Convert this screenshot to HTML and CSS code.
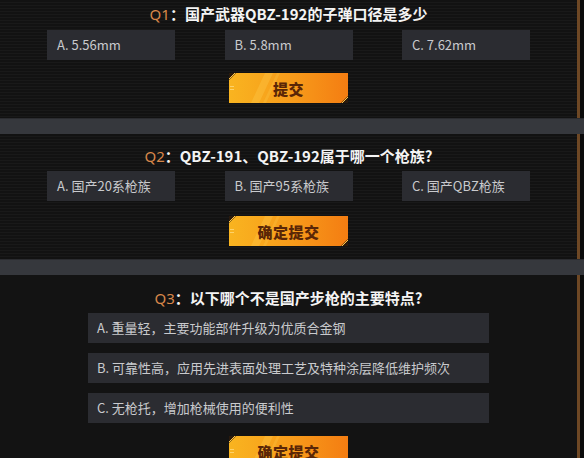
FILE: index.html
```html
<!DOCTYPE html>
<html lang="zh-CN">
<head>
<meta charset="utf-8">
<title>Quiz</title>
<link rel="stylesheet" href="styles.css">
</head>
<body>
<div class="page">
  <section class="quiz quiz-first">
    <h2 class="q-title"><span class="q-no">Q1</span>：国产武器QBZ-192的子弹口径是多少</h2>
    <div class="opts-row">
      <div class="opt">A. 5.56mm</div>
      <div class="opt">B. 5.8mm</div>
      <div class="opt">C. 7.62mm</div>
    </div>
    <div class="btn">
      <svg class="btn-bg" viewBox="0 0 119 30" preserveAspectRatio="none">
        <defs>
          <linearGradient id="g1" x1="0" y1="0" x2="1" y2="0">
            <stop offset="0" stop-color="#f9b420"/>
            <stop offset="0.55" stop-color="#f79a1a"/>
            <stop offset="1" stop-color="#f47d12"/>
          </linearGradient>
        </defs>
        <rect width="119" height="30" fill="url(#g1)"/>
        <polygon points="22,30 36,0 44,0 30,30" fill="#ffd45a" opacity="0.28"/>
        <polygon points="34,30 48,0 51,0 37,30" fill="#ffd45a" opacity="0.22"/>
        <polygon points="0,0 7,0 0,7" fill="#2a1a0c"/>
        <line x1="0" y1="6" x2="6" y2="0" stroke="#ffc54a" stroke-width="1"/>
        <polygon points="119,30 112,30 119,23" fill="#2a1a0c"/>
        <line x1="113" y1="30" x2="119" y2="24" stroke="#ffc54a" stroke-width="1"/>
        <rect x="1" y="13" width="4" height="1" fill="#ffe08a" opacity="0.7"/>
        <rect x="1" y="16" width="4" height="1" fill="#ffe08a" opacity="0.7"/>
      </svg>
      <span class="btn-label">提交</span>
    </div>
  </section>
  <div class="sep"></div>
  <section class="quiz">
    <h2 class="q-title"><span class="q-no">Q2</span>：QBZ-191、QBZ-192属于哪一个枪族?</h2>
    <div class="opts-row">
      <div class="opt">A. 国产20系枪族</div>
      <div class="opt">B. 国产95系枪族</div>
      <div class="opt">C. 国产QBZ枪族</div>
    </div>
    <div class="btn">
      <svg class="btn-bg" viewBox="0 0 119 30" preserveAspectRatio="none">
        <defs>
          <linearGradient id="g2" x1="0" y1="0" x2="1" y2="0">
            <stop offset="0" stop-color="#f9b420"/>
            <stop offset="0.55" stop-color="#f79a1a"/>
            <stop offset="1" stop-color="#f47d12"/>
          </linearGradient>
        </defs>
        <rect width="119" height="30" fill="url(#g2)"/>
        <polygon points="22,30 36,0 44,0 30,30" fill="#ffd45a" opacity="0.28"/>
        <polygon points="34,30 48,0 51,0 37,30" fill="#ffd45a" opacity="0.22"/>
        <polygon points="0,0 7,0 0,7" fill="#2a1a0c"/>
        <line x1="0" y1="6" x2="6" y2="0" stroke="#ffc54a" stroke-width="1"/>
        <polygon points="119,30 112,30 119,23" fill="#2a1a0c"/>
        <line x1="113" y1="30" x2="119" y2="24" stroke="#ffc54a" stroke-width="1"/>
        <rect x="1" y="13" width="4" height="1" fill="#ffe08a" opacity="0.7"/>
        <rect x="1" y="16" width="4" height="1" fill="#ffe08a" opacity="0.7"/>
      </svg>
      <span class="btn-label">确定提交</span>
    </div>
  </section>
  <div class="sep"></div>
  <section class="quiz quiz-last">
    <h2 class="q-title"><span class="q-no">Q3</span>：以下哪个不是国产步枪的主要特点?</h2>
    <div class="opts-col">
      <div class="opt opt-wide">A. 重量轻，主要功能部件升级为优质合金钢</div>
      <div class="opt opt-wide">B. 可靠性高，应用先进表面处理工艺及特种涂层降低维护频次</div>
      <div class="opt opt-wide">C. 无枪托，增加枪械使用的便利性</div>
    </div>
    <div class="btn">
      <svg class="btn-bg" viewBox="0 0 119 30" preserveAspectRatio="none">
        <defs>
          <linearGradient id="g3" x1="0" y1="0" x2="1" y2="0">
            <stop offset="0" stop-color="#f9b420"/>
            <stop offset="0.55" stop-color="#f79a1a"/>
            <stop offset="1" stop-color="#f47d12"/>
          </linearGradient>
        </defs>
        <rect width="119" height="30" fill="url(#g3)"/>
        <polygon points="22,30 36,0 44,0 30,30" fill="#ffd45a" opacity="0.28"/>
        <polygon points="34,30 48,0 51,0 37,30" fill="#ffd45a" opacity="0.22"/>
        <polygon points="0,0 7,0 0,7" fill="#2a1a0c"/>
        <line x1="0" y1="6" x2="6" y2="0" stroke="#ffc54a" stroke-width="1"/>
        <polygon points="119,30 112,30 119,23" fill="#2a1a0c"/>
        <line x1="113" y1="30" x2="119" y2="24" stroke="#ffc54a" stroke-width="1"/>
        <rect x="1" y="13" width="4" height="1" fill="#ffe08a" opacity="0.7"/>
        <rect x="1" y="16" width="4" height="1" fill="#ffe08a" opacity="0.7"/>
      </svg>
      <span class="btn-label">确定提交</span>
    </div>
  </section>
</div>
</body>
</html>
```

FILE: styles.css
```css
html, body {
  margin: 0;
  padding: 0;
  background: #0b0b0b;
}

body {
  font-family: "Noto Sans CJK SC", "Noto Sans", sans-serif;
  width: 584px;
  height: 458px;
  overflow: hidden;
}

.page {
  width: 584px;
  display: flex;
  flex-direction: column;
}

.quiz {
  width: 577px;
  border-right: 3px solid #6e4825;
  box-sizing: content-box;
  display: flex;
  flex-direction: column;
  align-items: center;
  padding: 11px 0 13px;
  background:
    repeating-linear-gradient(to bottom, #121212 0 2px, #191919 2px 3px);
}

.quiz-first {
  padding-top: 3px;
  padding-bottom: 15px;
}

.quiz-last {
  padding-top: 12px;
  background: #131313;
}

.sep {
  height: 16px;
  background: #36383d;
  border-top: 1px solid #2b2c30;
  box-sizing: border-box;
}

.q-title {
  margin: 0;
  height: 22px;
  line-height: 22px;
  font-size: 15px;
  font-weight: 700;
  color: #f4f4f4;
  white-space: nowrap;
}

.q-no {
  color: #d8874a;
  font-weight: 400;
  font-family: "Noto Sans", "Noto Sans CJK SC", sans-serif;
}

.opts-row {
  display: flex;
  gap: 49.5px;
  margin-top: 5px;
}

.quiz .opts-row {
  margin-top: 4px;
}

.quiz-first .opts-row {
  margin-top: 5px;
}

.opt {
  width: 128px;
  height: 30px;
  box-sizing: border-box;
  background: #2b2c31;
  color: #c9cacd;
  font-size: 13px;
  line-height: 30px;
  padding-left: 10px;
  white-space: nowrap;
}

.opts-col {
  display: flex;
  flex-direction: column;
  gap: 10px;
  margin-top: 4px;
}

.opt-wide {
  width: 401px;
  padding-left: 9px;
}

.btn {
  position: relative;
  width: 119px;
  height: 30px;
  margin-top: 15px;
  display: flex;
  align-items: center;
  justify-content: center;
}

.quiz-first .btn {
  margin-top: 13px;
}

.quiz-last .btn {
  margin-top: 13px;
}

.btn-bg {
  position: absolute;
  left: 0;
  top: 0;
  width: 119px;
  height: 30px;
}

.btn-label {
  position: relative;
  font-size: 15px;
  font-weight: 900;
  color: #5a2607;
  letter-spacing: 0.5px;
}
```
